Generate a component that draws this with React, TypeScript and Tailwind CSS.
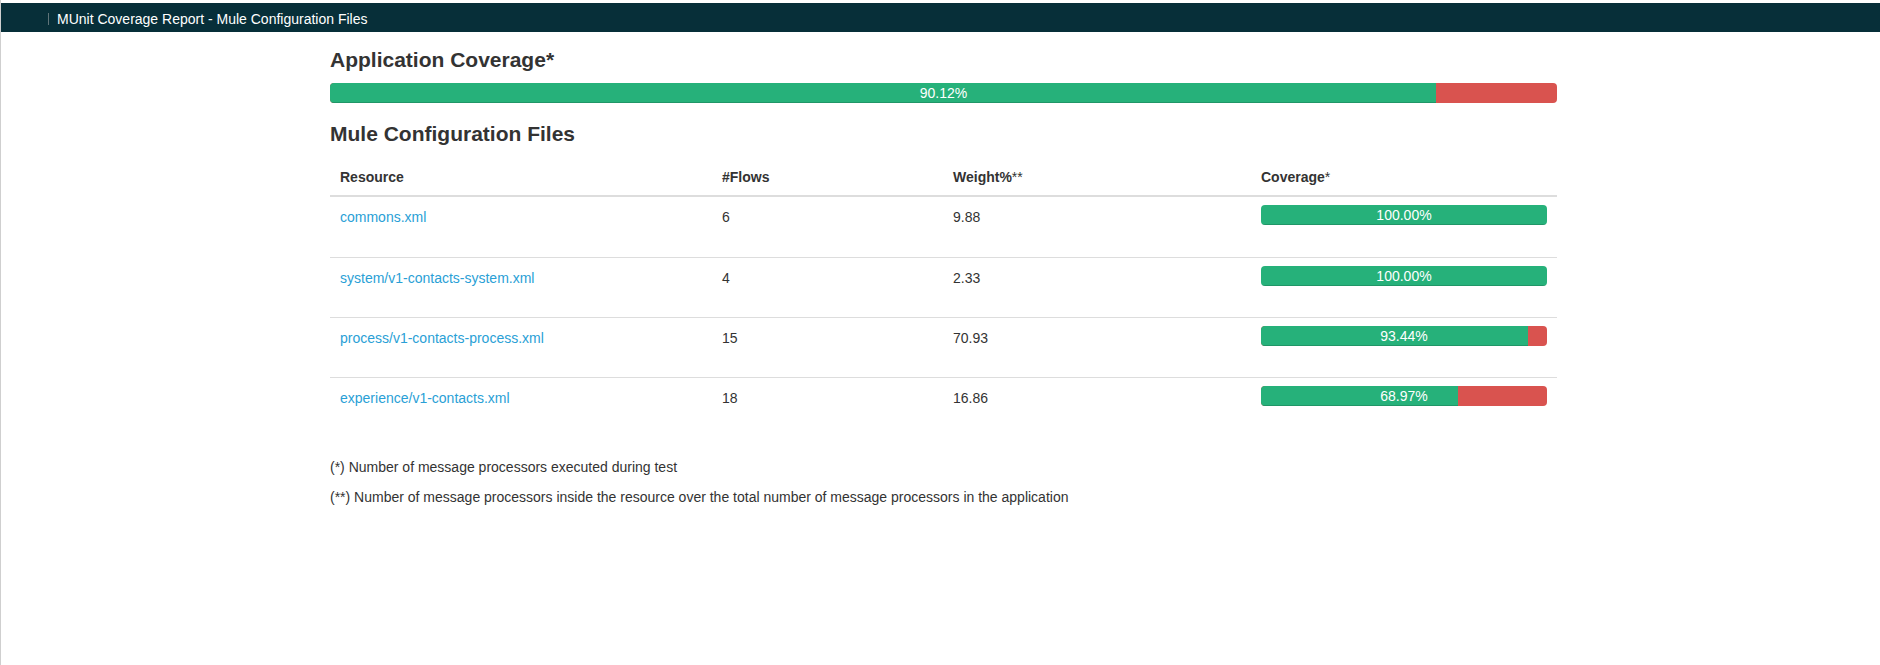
import React from 'react'

/* ── Data ──────────────────────────────────── */

interface Resource {
  name: string
  flows: number
  weight: string
  coverage: number
}

const resources: Resource[] = [
  { name: 'commons.xml', flows: 6, weight: '9.88', coverage: 100 },
  { name: 'system/v1-contacts-system.xml', flows: 4, weight: '2.33', coverage: 100 },
  { name: 'process/v1-contacts-process.xml', flows: 15, weight: '70.93', coverage: 93.44 },
  { name: 'experience/v1-contacts.xml', flows: 18, weight: '16.86', coverage: 68.97 },
]

const APP_COVERAGE = 90.12

/* ── Progress bar ──────────────────────────── */

function CoverageBar({ value, className = '' }: { value: number; className?: string }) {
  return (
    <div className={`relative h-5 rounded-[4px] bg-[#d9534f] overflow-hidden ${className}`}>
      <div
        className="h-full bg-[#26b17a] shadow-[inset_0_-1px_0_rgba(0,0,0,0.15)]"
        style={{ width: `${value}%` }}
      />
      <span className="absolute inset-0 text-center text-sm leading-5 text-white">
        {value.toFixed(2)}%
      </span>
    </div>
  )
}

/* ── App ───────────────────────────────────── */

export default function App() {
  return (
    <div
      className="min-h-[665px] bg-white border-l border-[#cfcfcf] pt-[3px] text-[#333] text-sm"
      style={{ fontFamily: '"Liberation Sans", Arial, Helvetica, sans-serif' }}
    >
      <header className="h-[29px] bg-[#072f39] flex items-start pt-[6px] pl-[47px]">
        <span className="mt-[4px] w-px h-[12px] bg-[#5f7479]" />
        <span className="ml-[8px] leading-5 text-white">
          MUnit Coverage Report - Mule Configuration Files
        </span>
      </header>

      <main className="ml-[329px] w-[1227px]">
        <h4 className="mt-[18px] text-[21px] leading-5 font-bold">Application Coverage*</h4>
        <CoverageBar value={APP_COVERAGE} className="mt-[13px]" />

        <h4 className="mt-[21px] text-[21px] leading-5 font-bold">Mule Configuration Files</h4>

        <div className="mt-[13px]">
          <div className="grid grid-cols-[382px_231px_308px_1fr] border-b-2 border-[#ddd] font-bold leading-5">
            <div className="pt-[10px] pb-[8px] px-[10px]">Resource</div>
            <div className="pt-[10px] pb-[8px] px-[10px]">#Flows</div>
            <div className="pt-[10px] pb-[8px] px-[10px]">
              Weight%<span className="font-normal">**</span>
            </div>
            <div className="pt-[10px] pb-[8px] px-[10px]">
              Coverage<span className="font-normal">*</span>
            </div>
          </div>

          {resources.map((r, i) => (
            <div
              key={r.name}
              className={`grid grid-cols-[382px_231px_308px_1fr] h-[60px] leading-5 ${
                i > 0 ? 'border-t border-[#ddd]' : ''
              }`}
            >
              <div className="pt-[10px] px-[10px]">
                <a href="#" className="text-[#2a9fd6]">{r.name}</a>
              </div>
              <div className="pt-[10px] px-[10px]">{r.flows}</div>
              <div className="pt-[10px] px-[10px]">{r.weight}</div>
              <div className="pt-[8px] px-[10px]">
                <CoverageBar value={r.coverage} />
              </div>
            </div>
          ))}
        </div>

        <p className="mt-[20px] leading-5">(*) Number of message processors executed during test</p>
        <p className="mt-[10px] leading-5">
          (**) Number of message processors inside the resource over the total number of message processors in the application
        </p>
      </main>
    </div>
  )
}
